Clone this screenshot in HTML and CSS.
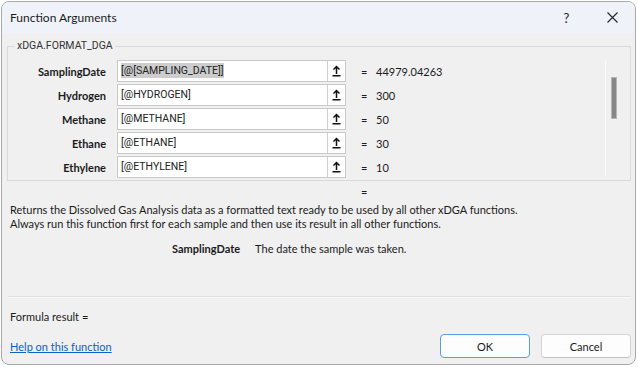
FILE: index.html
```html
<!DOCTYPE html>
<html lang="en">
<head>
    <meta charset="UTF-8">
    <title>Function Arguments</title>
    <link rel="stylesheet" href="styles.css">
</head>
<body>
    <div class="window">
        <div class="titlebar">
            <span class="title">Function Arguments</span>
            <span class="help-btn">?</span>
            <span class="close-btn">
                <svg width="11" height="11" viewBox="0 0 11 11"><path d="M0.5 0.5L10.5 10.5M10.5 0.5L0.5 10.5" stroke="#222" stroke-width="1.1" fill="none"/></svg>
            </span>
        </div>

        <div class="dialog">
            <fieldset class="group">
                <legend>xDGA.FORMAT_DGA</legend>
                <div class="group-inner">
                    <div class="args">
                        <label class="arg-name">SamplingDate</label>
                        <div class="arg-input"><span class="arg-text"><span class="sel">[@[SAMPLING_DATE]]</span></span><span class="ref-btn"><svg width="9" height="12" viewBox="0 0 9 12"><path d="M4.5 1.5V9M1.5 4.5L4.5 1.5L7.5 4.5M0.5 10.8H8.5" stroke="#111" stroke-width="1.5" fill="none"/></svg></span></div>
                        <span class="eq">=</span>
                        <span class="arg-value">44979.04263</span>

                        <label class="arg-name">Hydrogen</label>
                        <div class="arg-input"><span class="arg-text">[@HYDROGEN]</span><span class="ref-btn"><svg width="9" height="12" viewBox="0 0 9 12"><path d="M4.5 1.5V9M1.5 4.5L4.5 1.5L7.5 4.5M0.5 10.8H8.5" stroke="#111" stroke-width="1.5" fill="none"/></svg></span></div>
                        <span class="eq">=</span>
                        <span class="arg-value">300</span>

                        <label class="arg-name">Methane</label>
                        <div class="arg-input"><span class="arg-text">[@METHANE]</span><span class="ref-btn"><svg width="9" height="12" viewBox="0 0 9 12"><path d="M4.5 1.5V9M1.5 4.5L4.5 1.5L7.5 4.5M0.5 10.8H8.5" stroke="#111" stroke-width="1.5" fill="none"/></svg></span></div>
                        <span class="eq">=</span>
                        <span class="arg-value">50</span>

                        <label class="arg-name">Ethane</label>
                        <div class="arg-input"><span class="arg-text">[@ETHANE]</span><span class="ref-btn"><svg width="9" height="12" viewBox="0 0 9 12"><path d="M4.5 1.5V9M1.5 4.5L4.5 1.5L7.5 4.5M0.5 10.8H8.5" stroke="#111" stroke-width="1.5" fill="none"/></svg></span></div>
                        <span class="eq">=</span>
                        <span class="arg-value">30</span>

                        <label class="arg-name">Ethylene</label>
                        <div class="arg-input"><span class="arg-text">[@ETHYLENE]</span><span class="ref-btn"><svg width="9" height="12" viewBox="0 0 9 12"><path d="M4.5 1.5V9M1.5 4.5L4.5 1.5L7.5 4.5M0.5 10.8H8.5" stroke="#111" stroke-width="1.5" fill="none"/></svg></span></div>
                        <span class="eq">=</span>
                        <span class="arg-value">10</span>
                    </div>
                    <div class="scroll"><div class="thumb"></div></div>
                </div>
            </fieldset>

            <div class="result-eq">=</div>
            <p class="desc">Returns the Dissolved Gas Analysis data as a formatted text ready to be used by all other xDGA functions.<br>Always run this function first for each sample and then use its result in all other functions.</p>
            <div class="arg-help"><b>SamplingDate</b><span>The date the sample was taken.</span></div>

            <div class="separator"></div>
            <div class="formula">Formula result =</div>

            <div class="footer">
                <a href="#" class="help-link">Help on this function</a>
                <div class="buttons">
                    <button class="btn primary">OK</button>
                    <button class="btn">Cancel</button>
                </div>
            </div>
        </div>
    </div>
</body>
</html>
```

FILE: styles.css
```css
* {
    margin: 0;
    padding: 0;
    box-sizing: border-box;
}

body {
    font-family: 'Lato', 'Open Sans', sans-serif;
    font-size: 11px;
    color: #1b1b1b;
    background-color: #ffffff;
}

.window {
    margin: 1px 0 0 1px;
    width: 635px;
    height: 364px;
    border: 1px solid #a9a9a9;
    border-radius: 8px;
    background-color: #f0f0f0;
    overflow: hidden;
}

.titlebar {
    height: 31px;
    display: flex;
    align-items: center;
    background-color: #eff3f9;
    padding-left: 8px;
}

.title {
    flex: 1;
    font-size: 12px;
}

.help-btn {
    width: 45px;
    text-align: center;
    font-size: 13px;
}

.close-btn {
    width: 46px;
    display: flex;
    justify-content: center;
}

.dialog {
    padding: 0 4px 0 5px;
}

/* group box */
.group {
    margin-top: 5px;
    border: 1px solid #d9d9d9;
    padding: 6px 0 2px 0;
}

.group legend {
    margin-left: 7px;
    padding: 0 2px;
    line-height: 16px;
    font-family: 'Roboto', sans-serif;
    font-size: 10.5px;
    color: #333;
}

.group-inner {
    display: flex;
}

.args {
    flex: 1;
    display: grid;
    grid-template-columns: 109px 229px 30px 1fr;
    grid-auto-rows: 22px;
    row-gap: 2px;
    align-items: center;
}

.arg-name {
    font-weight: bold;
    text-align: right;
    padding-right: 11px;
}

.arg-input {
    height: 22px;
    display: flex;
    background-color: #fff;
    border: 1px solid #c9c9c9;
}

.arg-text {
    flex: 1;
    padding-left: 3px;
    line-height: 20px;
    font-family: 'Roboto', sans-serif;
    font-size: 10.5px;
    color: #222;
}

.sel {
    background-color: #cdcdcd;
    padding: 1px 0;
}

.ref-btn {
    width: 18px;
    border-left: 1px solid #d0d0d0;
    display: flex;
    align-items: center;
    justify-content: center;
}

.eq {
    padding-left: 15px;
}

.scroll {
    width: 14px;
    margin-right: 11px;
    border-left: 1px solid #fbfbfb;
    height: 116px;
}

.thumb {
    margin: 17px 0 0 5px;
    width: 6px;
    height: 42px;
    background-color: #878787;
    border: 1px solid #b5b5b5;
}

.result-eq {
    margin: 4px 0 0 354px;
    line-height: 14px;
}

.desc {
    margin-top: 4px;
    padding-left: 3px;
    line-height: 14px;
}

.arg-help {
    margin: 11px 0 0 165px;
    line-height: 14px;
    display: flex;
    gap: 15px;
}

.separator {
    margin: 40px 0 0 1px;
    height: 2px;
    border-top: 1px solid #e0e0e0;
    border-bottom: 1px solid #fafafa;
}

.formula {
    margin-top: 12px;
    padding-left: 3px;
    line-height: 14px;
}

.footer {
    margin-top: 10px;
    display: flex;
    align-items: center;
    padding-left: 3px;
}

.help-link {
    flex: 1;
    color: #0a62c4;
    text-decoration: underline;
}

.buttons {
    display: flex;
    gap: 11px;
}

.btn {
    width: 90px;
    height: 24px;
    font-family: inherit;
    font-size: 11px;
    color: #1b1b1b;
    background-color: #fdfdfd;
    border: 1px solid #d3d3d3;
    border-bottom-color: #c2c2c2;
    border-radius: 4px;
}

.btn.primary {
    border: 1px solid #5a9fdc;
}
```
